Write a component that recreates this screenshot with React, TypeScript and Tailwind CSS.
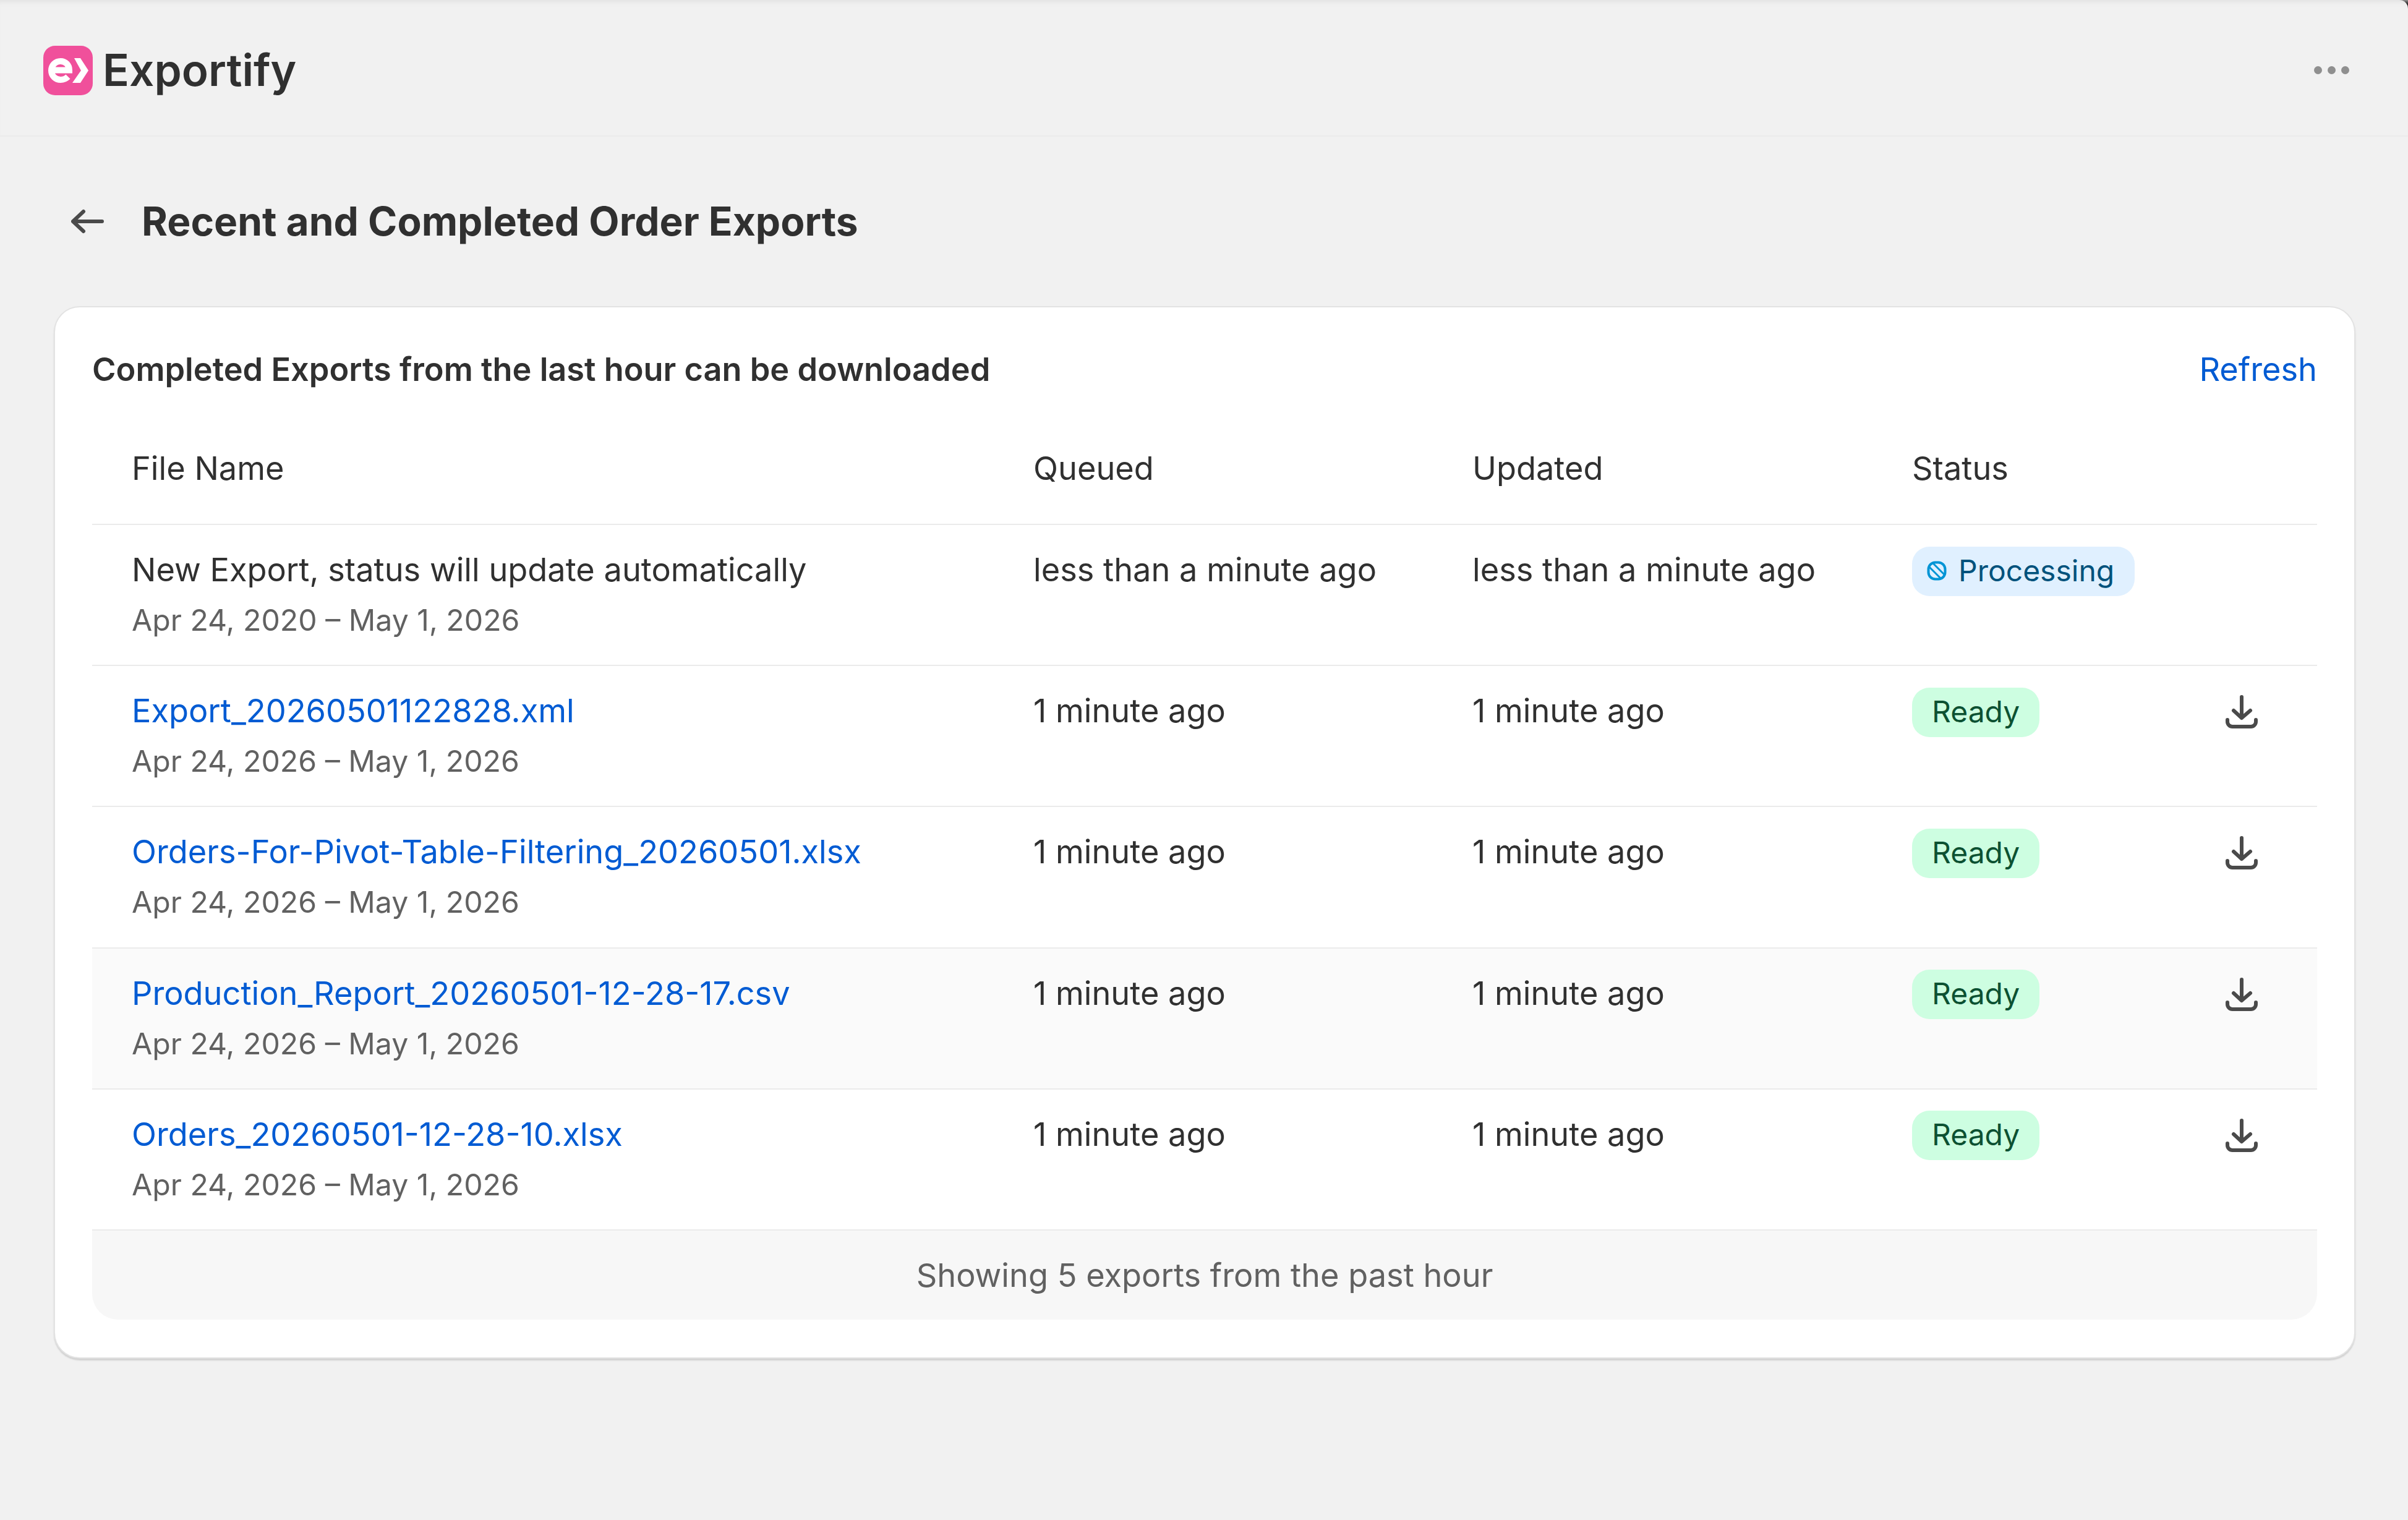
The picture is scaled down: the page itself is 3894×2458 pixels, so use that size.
const font = "font-['Inter','Liberation_Sans',sans-serif]";

function Logo() {
  return (
    <svg width="80" height="80" viewBox="0 0 80 80" className="shrink-0">
      <rect width="80" height="80" rx="19" fill="#f0509b" />
      <path d="M14 39.5H42C42 31 36 25 28 25C19 25 13 32 13 40C13 49 20 55 28 55C33 55 37 53 40 50" fill="none" stroke="#fff" strokeWidth="10" />
      <path d="M50 20H60L73 40L60 60H47L61 40Z" fill="#fff" />
    </svg>
  );
}

function BackArrow() {
  return (
    <svg width="54" height="40" viewBox="0 0 54 40" fill="none" stroke="#4a4a4a" strokeWidth="6" strokeLinecap="round" strokeLinejoin="round">
      <path d="M3 20H50M20 4L3 20L20 36" />
    </svg>
  );
}

function DownloadIcon() {
  return (
    <svg width="52" height="54" viewBox="0 0 52 54" fill="none" stroke="#4a4a4a" strokeWidth="6" strokeLinecap="round" strokeLinejoin="round">
      <path d="M26 3V37M13 25L26 37L40 25" />
      <path d="M3 40V43A8 8 0 0 0 11 51H41A8 8 0 0 0 49 43V40" />
    </svg>
  );
}

function ProgressIcon() {
  return (
    <svg width="32" height="32" viewBox="0 0 32 32" fill="none" stroke="#0094d5" className="shrink-0">
      <rect x="2.5" y="2.5" width="27" height="27" rx="11" strokeWidth="4" />
      <path d="M4 10L22 28M10 4L28 22" strokeWidth="3" />
    </svg>
  );
}

function Badge({ kind }: { kind: "ready" | "processing" }) {
  if (kind === "processing") {
    return (
      <span className="inline-flex h-[80px] items-center gap-[19px] rounded-[28px] bg-[#e0f0ff] pb-[2px] pl-[24px] pr-[33px] text-[48px] leading-none text-[#00527c]">
        <ProgressIcon />
        Processing
      </span>
    );
  }
  return (
    <span className="inline-flex h-[80px] items-center rounded-[28px] bg-[#cdfee1] px-[32px] pb-[2px] text-[48px] leading-none text-[#0c5132]">
      Ready
    </span>
  );
}

const rows = [
  { name: "New Export, status will update automatically", range: "Apr 24, 2020 – May 1, 2026", time: "less than a minute ago", link: false, hover: false },
  { name: "Export_20260501122828.xml", range: "Apr 24, 2026 – May 1, 2026", time: "1 minute ago", link: true, hover: false },
  { name: "Orders-For-Pivot-Table-Filtering_20260501.xlsx", range: "Apr 24, 2026 – May 1, 2026", time: "1 minute ago", link: true, hover: false },
  { name: "Production_Report_20260501-12-28-17.csv", range: "Apr 24, 2026 – May 1, 2026", time: "1 minute ago", link: true, hover: true },
  { name: "Orders_20260501-12-28-10.xlsx", range: "Apr 24, 2026 – May 1, 2026", time: "1 minute ago", link: true, hover: false },
];

const grid = "grid grid-cols-[1458px_710px_711px_1fr_148px]";

export default function App() {
  return (
    <div className="h-[2458px] w-[3894px] overflow-hidden bg-black">
      <div className={`h-full w-full rounded-tr-[14px] bg-[#f1f1f1] text-[52.3px] text-[#303030] ${font}`}>
        <header className="flex h-[221px] items-center justify-between border-b-[2px] border-[#ebebeb] pl-[70px] pr-[95px] pt-[8px] shadow-[inset_0_10px_10px_-8px_#dedede]">
          <div className="flex items-center gap-[16px]">
            <Logo />
            <span className="text-[71px] font-semibold leading-none">Exportify</span>
          </div>
          <div className="flex gap-[9px]">
            <span className="h-[13px] w-[13px] rounded-full bg-[#8f8f8f]" />
            <span className="h-[13px] w-[13px] rounded-full bg-[#8f8f8f]" />
            <span className="h-[13px] w-[13px] rounded-full bg-[#8f8f8f]" />
          </div>
        </header>

        <div className="flex h-[274px] items-center gap-[60px] pl-[115px]">
          <BackArrow />
          <h1 className="text-[64px] font-[650] leading-none">Recent and Completed Order Exports</h1>
        </div>

        <section className="ml-[87px] mr-[85px] h-[1702px] rounded-[42px] border-[2.5px] border-[#e3e3e3] bg-white px-[60px] shadow-[0_3px_2px_#d2d2d2]">
          <div className="flex h-[200px] items-center justify-between">
            <h2 className="font-semibold">Completed Exports from the last hour can be downloaded</h2>
            <button className="text-[#005bd3]">Refresh</button>
          </div>
          <div className={`${grid} h-[150px] items-center pb-[30px]`}>
            <div className="pl-[64px]">File Name</div>
            <div className="pl-[64px]">Queued</div>
            <div className="pl-[64px]">Updated</div>
            <div className="pl-[64px]">Status</div>
            <div />
          </div>
          {rows.map((r) => (
            <div key={r.name} className={`${grid} h-[228.2px] border-t-[2.5px] border-[#ebebeb] pt-[32px] ${r.hover ? "bg-[#fafafa]" : ""}`}>
              <div className="pl-[64px]">
                <div className={`h-[80px] leading-[80px] whitespace-nowrap ${r.link ? "text-[#005bd3]" : ""}`}>{r.name}</div>
                <div className="mt-[2px] h-[80px] text-[48.2px] leading-[80px] text-[#616161]">{r.range}</div>
              </div>
              <div className="h-[80px] pl-[64px] leading-[80px]">{r.time}</div>
              <div className="h-[80px] pl-[64px] leading-[80px]">{r.time}</div>
              <div className="flex items-start pl-[64px] pt-[2.5px]">
                <Badge kind={r.link ? "ready" : "processing"} />
              </div>
              <div className="pt-[15px]">
                {r.link && <DownloadIcon />}
              </div>
            </div>
          ))}
          <div className="flex h-[146px] items-center justify-center rounded-b-[42px] border-t-[2.5px] border-[#ebebeb] bg-[#f7f7f7] text-[#616161]">
            Showing 5 exports from the past hour
          </div>
        </section>
      </div>
    </div>
  );
}
